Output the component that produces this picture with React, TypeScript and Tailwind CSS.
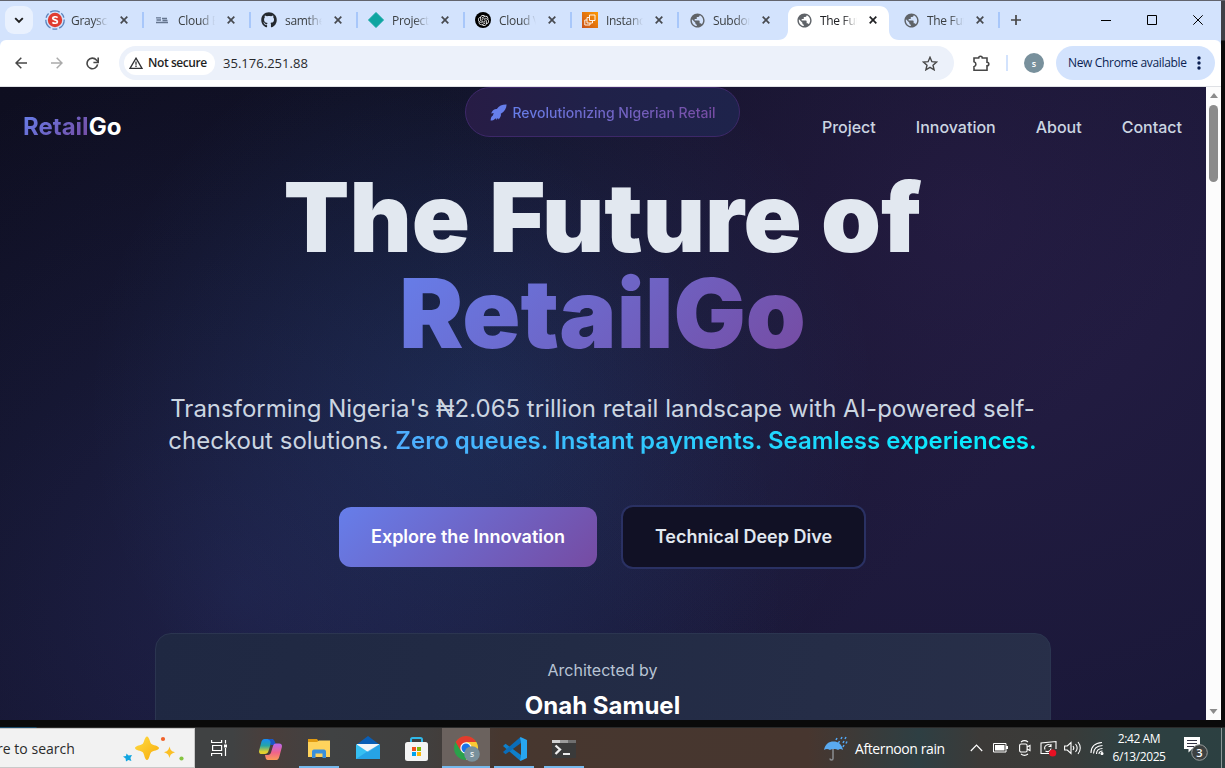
import React from "react";
import { FaGithub } from "react-icons/fa";
import { MdPublic } from "react-icons/md";
import { SiOpenai } from "react-icons/si";

const X = ({ dark = false }: { dark?: boolean }) => (
  <svg width="8" height="8" viewBox="0 0 8 8" className={dark ? "text-[#202124]" : "text-[#474a50]"}>
    <path d="M.7.7l6.6 6.6M7.3.7L.7 7.3" stroke="currentColor" strokeWidth="1.7" />
  </svg>
);

const Globe = () => <MdPublic size={17} color="#5f6368" />;

const tabs: { title: string; icon: React.ReactNode }[] = [
  {
    title: "Graysca",
    icon: (
      <svg width="20" height="20" viewBox="0 0 20 20">
        <circle cx="10" cy="10" r="9.2" fill="none" stroke="#5a83bd" strokeWidth="1.3" strokeDasharray="10 2 5 2" />
        <circle cx="10" cy="10" r="7.2" fill="#e03c31" />
        <path d="M12.6 7.6C11 6.3 7.7 6.5 7.7 8.3c0 2 4.7 1.2 4.7 3.4 0 1.9-3.400 2-5 .6" fill="none" stroke="#fff" strokeWidth="1.7" />
      </svg>
    ),
  },
  {
    title: "Cloud E",
    icon: (
      <svg width="12" height="7" viewBox="0 0 12 7">
        <path d="M0 .8h5M.5 3h4.500M6 1.500h5M6.500 3.500h5M0 5.500h12" stroke="#64758f" strokeWidth="1.300" />
      </svg>
    ),
  },
  { title: "samthe", icon: <FaGithub size={16} color="#24292f" /> },
  {
    title: "Project",
    icon: (
      <svg width="16" height="16" viewBox="0 0 16 16">
        <path d="M8 .5L15.500 8 8 15.500.5 8z" fill="#0ea5a0" stroke="#0ea5a0" strokeLinejoin="round" />
      </svg>
    ),
  },
  {
    title: "Cloud V",
    icon: (
      <span className="flex size-4 items-center justify-center rounded-full bg-black">
        <SiOpenai size={11} color="#fff" />
      </span>
    ),
  },
  {
    title: "Instanc",
    icon: (
      <svg width="16" height="16" viewBox="0 0 16 16">
        <defs>
          <linearGradient id="aws" x1="0" y1="1" x2="1" y2="0">
            <stop stopColor="#c8511b" />
            <stop offset="1" stopColor="#f90" />
          </linearGradient>
        </defs>
        <path d="M0 0h16v16H0z" fill="url(#aws)" />
        <path d="M7.500 3h5.500v5.500H7.500zM10.500 9v2H5V5.500h2M5 8H2.800v5H8v-2" fill="none" stroke="#fff" strokeWidth=".9" strokeLinejoin="round" />
      </svg>
    ),
  },
  { title: "Subdom", icon: <Globe /> },
  { title: "The Fut", icon: <Globe /> },
  { title: "The Fut", icon: <Globe /> },
];

function TabStrip() {
  return (
    <div className="flex h-[39px] shrink-0 bg-[#d3e3fd] pt-[5px]">
      <div className="ml-[5px] mr-[3px] flex h-7 w-7 items-center justify-center rounded-[9px] bg-[#e9f1fe]">
        <svg width="10" height="7" viewBox="0 0 10 7">
          <path d="M1.200 1.200L5 5l3.800-3.800" fill="none" stroke="#1f1f1f" strokeWidth="1.900" />
        </svg>
      </div>
      {tabs.map((t, i) => (
        <div key={i} className="relative flex h-[34px] w-[107px] shrink-0">
          {i === 7 && (
            <svg className="absolute -left-[7px] top-0" width="121" height="34" viewBox="0 0 121 34">
              <path d="M0 34c6 0 10-4 10-10V10C10 4 14 0 20 0h81c6 0 10 4 10 10v14c0 6 4 10 10 10z" fill="#fff" />
            </svg>
          )}
          <div className="relative flex h-7 w-full items-center">
            <span className="flex w-[38px] shrink-0 justify-center">{t.icon}</span>
            <span
              className={`-ml-[3px] mt-px block w-[37px] overflow-hidden whitespace-nowrap text-[12px] leading-4 tracking-[-0.3px] [mask-image:linear-gradient(to_right,#000_60%,transparent_100%)] ${i === 7 ? "text-[#202124]" : "text-[#3c4043]"}`}
            >
              {t.title}
            </span>
            <span className="ml-3 flex">
              <X dark={i === 7} />
            </span>
            {i !== 6 && i !== 7 && <span className="-mr-px ml-auto h-4 w-[2px] bg-[#a8c7fa]" />}
          </div>
        </div>
      ))}
      <div className="ml-[12px] flex h-7 items-center">
        <svg width="10" height="10" viewBox="0 0 10 10">
          <path d="M5 0v10M0 5h10" stroke="#474747" strokeWidth="1.700" />
        </svg>
      </div>
      <div className="ml-auto mr-[18px] flex h-7 items-center gap-[36px]">
        <svg width="10" height="10" viewBox="0 0 10 10">
          <path d="M0 5.500h10" stroke="#000" />
        </svg>
        <svg width="10" height="10" viewBox="0 0 10 10">
          <path d="M.5.5h9v9h-9z" fill="none" stroke="#000" />
        </svg>
        <svg width="10" height="10" viewBox="0 0 10 10">
          <path d="M.3.300l9.400 9.400M9.700.3L.3 9.700" stroke="#000" />
        </svg>
      </div>
    </div>
  );
}

function Toolbar() {
  return (
    <div className="flex h-[47px] shrink-0 items-center rounded-t-[6px] border-b border-[#dfe1e5] bg-white">
      <div className="flex w-[119px] shrink-0 items-center gap-[24px] pl-[15px]">
        <svg width="12" height="12" viewBox="0 0 12 12">
          <path d="M12 6H1.200M6.300.7L1 6l5.300 5.300" fill="none" stroke="#474747" strokeWidth="1.500" />
        </svg>
        <svg width="12" height="12" viewBox="0 0 12 12">
          <path d="M0 6h10.800M5.700.7L11 6l-5.300 5.300" fill="none" stroke="#ababab" strokeWidth="1.500" />
        </svg>
        <svg className="-ml-px" width="13" height="13" viewBox="0 0 13 13">
          <path d="M11.600 7.400A5.300 5.300 0 1 1 10.400 3L12 4.700" fill="none" stroke="#474747" strokeWidth="1.600" />
          <path d="M12.200.5v5H7.400" fill="none" stroke="#474747" strokeWidth="1.600" />
        </svg>
      </div>
      <div className="flex h-[34px] w-[835px] shrink-0 items-center rounded-full bg-[#ecf1fa] pl-[5px] pr-4">
        <div className="flex h-6 w-[91px] items-center rounded-full bg-white pl-[5px]">
          <svg width="14" height="12" viewBox="0 0 14 12">
            <path d="M7 1.200L13 11.300H1z" fill="none" stroke="#303134" strokeWidth="1.300" />
            <path d="M7 4.500v3.200M7 8.600v1.300" stroke="#303134" strokeWidth="1.300" />
          </svg>
          <span className="ml-[5px] whitespace-nowrap text-[12px] font-semibold tracking-[-0.42px] text-[#1f1f1f]">Not secure</span>
        </div>
        <span className="ml-2 mt-px text-[13px] tracking-[0.02px] text-[#28292c]">35.176.251.88</span>
        <svg className="ml-auto" width="16" height="15" viewBox="0 0 16 15">
          <path d="M8 1.300l1.900 4.400 4.700.4-3.600 3.100 1.100 4.600L8 11.400l-4.100 2.400L5 9.200 1.400 6.100l4.700-.4z" fill="none" stroke="#474747" strokeWidth="1.400" />
        </svg>
      </div>
      <svg className="ml-[19px]" width="17" height="17" viewBox="0 0 17 17">
        <path d="M1 3h4.700a1.800 1.800 0 0 1 3.600 0H14v4.200a1.800 1.800 0 0 1 0 3.600v4.500H1v-3.600a2.600 2.600 0 0 0 0-5z" fill="none" stroke="#474747" strokeWidth="1.600" />
      </svg>
      <span className="ml-4 h-4 w-[2px] bg-[#d3e3fd]" />
      <span className="ml-4 flex size-5 items-center justify-center rounded-full bg-[#78909c] text-[9px] font-semibold leading-none text-white">
        s
      </span>
      <div className="ml-3 flex h-[34px] w-[159px] items-center rounded-full bg-[#d3e3fd] pl-3 text-[12px] tracking-[-0.34px] text-[#0b1f52]">
        <span className="whitespace-nowrap">New Chrome available</span>
        <svg className="ml-[10px]" width="4" height="14" viewBox="0 0 4 14" fill="#0b1f52">
          <circle cx="2" cy="2" r="1.700" />
          <circle cx="2" cy="7" r="1.700" />
          <circle cx="2" cy="12" r="1.700" />
        </svg>
      </div>
    </div>
  );
}

function Page() {
  return (
    <div className="flex h-[633px] shrink-0">
      <main className="relative h-full w-[1206px] overflow-hidden font-['Inter',sans-serif] [background:radial-gradient(circle_at_20%_80%,rgba(90,110,234,0.15)_0%,transparent_50%),radial-gradient(circle_at_80%_20%,rgba(118,65,162,0.13)_0%,transparent_50%),radial-gradient(circle_at_40%_50%,rgba(60,160,254,0.13)_0%,transparent_50%),linear-gradient(135deg,#0e0e20_0%,#101024_20%,#15142e_50%,#1a1838_75%,#1a1839_100%)]">
        <div className="flex flex-col items-center pr-px">
          <div className="flex h-[50px] w-[275px] items-center justify-center gap-[5px] rounded-[25px] border border-[#3d2869] pl-px [background:linear-gradient(90deg,#271c45,#202149_45%,#1e234b)]">
            <svg width="17" height="17" viewBox="0 0 17 17">
              <path
                d="M16.600.4c-4-.2-7.600 1.200-9.800 4.600-2-.2-3.500.6-4.800 2.700l-.9 1.800 2.600-.5-.8 2.600C1.400 12.500.8 14 .6 16.400c2 0 3.200-.4 4.200-1.500l1.300-.6.2 1.700 1.600-2 .8 1.500 1.500-2.200c.8-1.200.9-2.300.6-3.500 3.800-2.200 5.700-5.500 5.800-9.400z"
                fill="#667eea"
              />
            </svg>
            <span className="mt-[2px] bg-linear-to-r from-[#667eea] to-[#764ba2] bg-clip-text text-[14px] font-medium leading-5 text-transparent">
              Revolutionizing Nigerian Retail
            </span>
          </div>
          <h1 className="mt-[32px] flex flex-col items-center text-[96px] font-black leading-[96px] text-[#e2e8f0]">
            <span>The Future of</span>
            <span className="bg-[linear-gradient(135deg,#667eea_0%,#764ba2_100%)] bg-clip-text text-transparent">RetailGo</span>
          </h1>
          <p className="mt-[32px] whitespace-nowrap text-center text-[24px] leading-8 text-[#cbd5e1]">
            Transforming Nigeria's ₦2.065 trillion retail landscape with AI-powered self-
            <br />
            checkout solutions.{" "}
            <span className="bg-[linear-gradient(90deg,#4facfe_0%,#00f2fe_100%)] bg-clip-text font-semibold text-transparent">
              Zero queues. Instant payments. Seamless experiences.
            </span>
          </p>
          <div className="mt-12 flex items-center gap-6">
            <button className="h-[60px] w-[258px] rounded-xl bg-[linear-gradient(135deg,#667eea_0%,#764ba2_100%)] pb-[2px] text-[18px] font-semibold text-white">
              Explore the Innovation
            </button>
            <button className="h-16 w-[245px] rounded-xl border-2 border-[#2a3163] bg-[#111125] pb-[2px] text-[18px] font-semibold text-[#e2e8f0]">
              Technical Deep Dive
            </button>
          </div>
          <div className="ml-px mt-16 flex h-[200px] w-[896px] flex-col items-center rounded-2xl border border-[#2b3550] bg-[linear-gradient(100deg,#1f2842,#222b45_45%,#282f49)] pr-px pt-6">
            <p className="text-[16px] leading-6 text-[#b8c4d4]">Architected by</p>
            <p className="mt-2 text-[24px] font-bold leading-8 text-white">Onah Samuel</p>
          </div>
        </div>
        <nav className="absolute left-0 top-0 flex h-20 w-full items-center justify-between px-6">
          <div className="-ml-px text-[24px] font-bold leading-8 text-white">
            <span className="bg-[linear-gradient(135deg,#667eea_0%,#764ba2_100%)] bg-clip-text text-transparent">Retail</span>Go
          </div>
          <div className="flex gap-10 text-[16px] font-medium text-[#cbd5e1]">
            <span>Project</span>
            <span>Innovation</span>
            <span>About</span>
            <span>Contact</span>
          </div>
        </nav>
      </main>
      <div className="flex w-[15px] flex-col items-center bg-[#fcfcfc] py-[6px]">
        <svg width="8" height="5" viewBox="0 0 8 5">
          <path d="M4 0l4 5H0z" fill="#8b8b8b" />
        </svg>
        <div className="mt-[7px] h-[77px] w-[9px] rounded-full bg-[#8b8b8b]" />
        <svg className="mt-auto" width="9" height="5" viewBox="0 0 8 5">
          <path d="M0 0h8L4 5z" fill="#8b8b8b" />
        </svg>
      </div>
    </div>
  );
}

const Bar = ({ children, w, active = false }: { children: React.ReactNode; w: string; active?: boolean }) => (
  <div className={`flex h-10 w-12 shrink-0 flex-col items-center ${active ? "bg-[#6b625e]" : ""}`}>
    <div className="flex h-[38px] items-center pt-1">{children}</div>
    <span className={`h-[2px] bg-[#76b9ed] ${w}`} />
  </div>
);

function Taskbar() {
  return (
    <div className="flex h-10 w-full shrink-0 items-center overflow-hidden bg-[linear-gradient(90deg,#404243_0%,#404243_19%,#4a3e3b_22%,#404243_27%,#404040_34%,#47372f_41%,#47362f_66%,#2e3f43_75%,#3c3a38_80%,#3a3b39_87%,#2e4041_92%,#2c4041_100%)] text-white">
      <div className="flex h-[40px] w-[195px] shrink-0 items-center self-start border border-l-0 border-[#c9c9c9] bg-[#f2f2f2] pt-px">
        <span className="-ml-[3px] whitespace-nowrap text-[14px] tracking-[0.03px] text-[#2b2b2b]">re to search</span>
        <svg className="ml-auto mr-[9px]" width="62" height="26" viewBox="0 0 62 26">
          <defs>
            <linearGradient id="star" x1="0" y1="0" x2="1" y2="1">
              <stop stopColor="#ffdc43" />
              <stop offset="1" stopColor="#f7ac0c" />
            </linearGradient>
          </defs>
          <path d="M24 .5c2.200 0 2.800 5.800 4.200 7.200S36 9.800 36 12s-6.400 2.800-7.800 4.200S26.200 24 24 24s-2.800-6.400-4.200-7.800S12 14.200 12 12s6.400-2.900 7.800-4.300S21.800.5 24 .5z" fill="url(#star)" />
          <path d="M46.500 10.500c1 3.800 1.800 4.500 5.500 5.800-3.700 1.300-4.500 2-5.500 5.700-1-3.700-1.800-4.400-5.500-5.700 3.700-1.300 4.500-2 5.500-5.800z" fill="#fbbf24" />
          <path d="M3.500 17.500l2 2 3.500-.5-1.600 3 1 3-3-1-2.400 1.500-.4-3L0 20.500l3-.5z" fill="#12a5e0" />
          <circle cx="40" cy="3" r="2.100" fill="#f0612a" />
          <circle cx="58.500" cy="22.500" r="2.100" fill="#85c440" />
        </svg>
      </div>
      <div className="flex w-[51px] shrink-0 justify-center pr-[3px]">
        <svg width="17" height="16" viewBox="0 0 17 16" fill="none" stroke="#fff" strokeWidth="1.200">
          <path d="M.6 0v2.500h10V0M1.600 5.500h9v5h-9zM.6 16v-2.500h10V16M14.500 0v3.500M14.500 8v8" />
          <path d="M13 4.500h3v3h-3z" fill="#fff" stroke="none" />
        </svg>
      </div>
      <Bar w="w-0">
        <svg width="23" height="21" viewBox="0 0 23 21">
          <defs>
            <linearGradient id="cpa" x1="0" y1="0" x2="0" y2="1">
              <stop stopColor="#168af5" />
              <stop offset=".45" stopColor="#26a5a5" />
              <stop offset=".85" stopColor="#e2d02f" />
            </linearGradient>
            <linearGradient id="cpb" x1="0" y1="0" x2="0" y2="1">
              <stop stopColor="#b868f0" />
              <stop offset=".55" stopColor="#f1648a" />
              <stop offset="1" stopColor="#fb9c58" />
            </linearGradient>
          </defs>
          <path d="M5.500 0H14l-2 4-2.500 8c-.7 2.300-2 3-3.500 3H3c-3 0-3.500-2-2.500-5l2-7.500C3.200 1.200 4 0 5.500 0z" fill="url(#cpa)" />
          <path d="M12.500 0c2 0 3 1 3.700 3.500L17 6h-5.500C12 2 11 1 8.500 0z" fill="#1b55c4" />
          <path d="M17.500 21H9c-2 0-2.500-2-3-5h3c1.500 0 2.600-1 3-2.500l2-6.500c.5-1.700 1.500-2.500 3-2.500h3c3 0 3.500 2 2.500 5l-2 7.500c-.7 2.500-1.500 4-3 4z" fill="url(#cpb)" />
        </svg>
      </Bar>
      <div className="w-[1px] shrink-0" />
      <Bar w="w-10">
        <svg className="-mt-px" width="22" height="19" viewBox="0 0 22 19">
          <path d="M0 0h9l1.500 2H22v5H0z" fill="#e09a11" />
          <path d="M0 3h9l2-1.500h11V18H0z" fill="#ffd35c" />
          <path d="M4 19v-6c0-1.500.7-2.500 2-2.500h10c1.300 0 2 1 2 2.500v6h-3.500v-4.500h-7V19z" fill="#3990db" />
        </svg>
      </Bar>
      <div className="w-[1px] shrink-0" />
      <Bar w="w-0">
        <svg className="-mt-[3px]" width="24" height="23" viewBox="0 0 24 23">
          <path d="M0 9L12 0l12 9v3H0z" fill="#0a5eb5" />
          <path d="M1 8h22v9H1z" fill="#f4f6f8" />
          <path d="M0 8L12 16 24 8V23H0z" fill="#36bff2" />
          <path d="M0 23l12-8 12-7V23z" fill="#1c91dd" opacity=".6" />
        </svg>
      </Bar>
      <Bar w="w-0">
        <svg className="-mt-px" width="23" height="24" viewBox="0 0 23 24">
          <path d="M6 6V2.500C6 1.500 6.500 1 7.500 1h8c1 0 1.500.5 1.500 1.500V6" fill="none" stroke="#30b8e8" strokeWidth="2" />
          <rect y="5" width="23" height="19" rx="2.500" fill="#f4f4f4" />
          <path d="M7 10h4v4H7z" fill="#f1511b" />
          <path d="M12 10h4v4h-4z" fill="#80bb0a" />
          <path d="M7 15h4v4H7z" fill="#00a3ee" />
          <path d="M12 15h4v4h-4z" fill="#fbb70b" />
        </svg>
      </Bar>
      <div className="w-[2px] shrink-0" />
      <Bar w="w-12" active>
        <svg className="ml-px" width="26" height="26" viewBox="0 0 26 26">
          <circle cx="12" cy="12" r="12" fill="#2aa14b" />
          <path d="M1.600 6A12 12 0 0 1 22.400 6H12L6.800 15z" fill="#e33b2e" />
          <path d="M22.400 6A12 12 0 0 1 12 24l5.200-9L12 6z" fill="#fcc934" />
          <circle cx="12" cy="12" r="5.700" fill="#fff" />
          <circle cx="12" cy="12" r="4.500" fill="#1a73e8" />
          <circle cx="18" cy="18" r="7.800" fill="#78909c" />
          <text x="18" y="21" textAnchor="middle" fontSize="8.500" fontWeight="600" fill="#e8eef1">s</text>
        </svg>
      </Bar>
      <Bar w="w-10">
        <svg className="-mt-px ml-px" width="24" height="24" viewBox="0 0 24 24">
          <path d="M17.500 24L0 9l2.500-2.300L18 18z" fill="#0f80ca" />
          <path d="M17.500 0L0 15l2.500 2.300L18 6z" fill="#0a6dba" />
          <path d="M17.500 0L24 3v18l-6.500 3-.5-1 1-4.500v-13L17 1z" fill="#27a6f0" />
        </svg>
      </Bar>
      <div className="w-[2px] shrink-0" />
      <Bar w="w-10">
        <svg width="24" height="18" viewBox="0 0 24 18">
          <path d="M0 0h24v18H0z" fill="#3a3a3a" />
          <path d="M0 0h8v3H0z" fill="#d0d0d0" />
          <path d="M8 0h8v3H8z" fill="#9b9b9b" />
          <path d="M16 0h8v3h-8z" fill="#6f6f6f" />
          <path d="M3.500 5.500L8 9.500l-4.500 4.500" fill="none" stroke="#eee" strokeWidth="2.300" />
          <path d="M11 14h7" stroke="#fff" strokeWidth="1.800" />
        </svg>
      </Bar>
      <div className="ml-auto flex shrink-0 items-center">
        <svg width="24" height="25" viewBox="0 0 24 25">
          <path d="M9 8v14.500c0 2-3 2-3 0" fill="none" stroke="#8a8d91" strokeWidth="1.500" />
          <path d="M0 14C1 8 5 5.500 9.500 5.500S18 8 19 14c-2-1.200-3.500-1.200-5 0-2-1.200-6-1.200-8 0-2-1.200-4-1.200-6 0z" fill="#5aaaf0" />
          <path d="M13 2l-1 2M18 1l-1 2M22 1l-1 2M15.500 5l-1 2M20 5l-1 2M23 5.500l-1 2M20 9l-1 2" stroke="#53a8f5" strokeWidth="1.500" />
        </svg>
        <span className="ml-[7px] w-[106px] whitespace-nowrap text-[14px] tracking-[-0.4px]">Afternoon rain</span>
        <svg className="ml-[9px]" width="13" height="8" viewBox="0 0 13 8">
          <path d="M.8 7l5.700-5.800L12.200 7" fill="none" stroke="#fff" strokeWidth="1.200" />
        </svg>
        <svg className="ml-[10px]" width="15" height="10" viewBox="0 0 15 10">
          <path d="M.5.5h12.500v8.500H.5z" fill="none" stroke="#fff" />
          <path d="M2 2h9.500v5.500H2zM13 3h2v3h-2z" fill="#fff" />
        </svg>
        <svg className="ml-[11px]" width="12" height="16" viewBox="0 0 12 16" fill="none" stroke="#fff" strokeWidth="1.100">
          <rect x=".6" y="4" width="7.500" height="8" rx="1.500" />
          <path d="M8 7l3-1.500v5L8 9M2 2c2-1.500 5-1.500 7 0M2 14c2 1.500 5 1.500 7 0" />
        </svg>
        <svg className="ml-[9px]" width="18" height="17" viewBox="0 0 18 17" fill="none" stroke="#fff" strokeWidth="1.100">
          <path d="M16 9V1.500L1 3v10.500h8M5 9.500A3.500 3.500 0 0 1 11 6V4M11 6.500H8.500M11 8.500A3.500 3.500 0 0 1 5.500 11" />
          <circle cx="12.700" cy="13" r="3.600" fill="#e81123" stroke="none" />
        </svg>
        <svg className="ml-[6px]" width="17" height="14" viewBox="0 0 17 14" fill="none" stroke="#fff" strokeWidth="1.100">
          <path d="M.6 5h2.700L7 1.500v11L3.300 9H.6zM9 5c1 1.200 1 2.800 0 4M11.500 3c2 2.400 2 5.600 0 8M14 1c3 3.500 3 8.500 0 12" />
        </svg>
        <svg className="ml-[9px]" width="14" height="14" viewBox="0 0 14 14" fill="none" stroke="#fff" strokeWidth="1.100">
          <path d="M1 12C1 6 5 2 12 1.500M3.500 12.500C3.500 8 7 5 12.500 4.500M6.500 13c0-3.500 2.500-5.500 6-5.500M9 13c0-2 1.500-3 3.500-3" />
          <circle cx="12" cy="12.500" r="1" fill="#fff" />
        </svg>
        <div className="-mt-px ml-[5px] flex w-[60px] flex-col items-center whitespace-nowrap text-[12px] leading-[18px] tracking-[-0.42px]">
          <span>2:42 AM</span>
          <span>6/13/2025</span>
        </div>
        <svg className="ml-[14px]" width="26" height="26" viewBox="0 0 26 26">
          <path d="M1 2h16v12H9l-3.500 3.500V14H1z" fill="#fff" />
          <path d="M4 5.500h10M4 8.500h10M4 11.500h7" stroke="#334" />
          <circle cx="16.500" cy="17.500" r="7.800" fill="#3d4141" stroke="#9a9d9d" />
          <text x="16.500" y="21.500" textAnchor="middle" fontSize="11" fontWeight="600" fill="#fff">3</text>
        </svg>
        <div className="ml-[12px] mr-[3px] h-10 w-px bg-[#8b9696]" />
      </div>
    </div>
  );
}

export default function App() {
  return (
    <div className="flex h-[768px] w-[1225px] flex-col overflow-hidden bg-[#0a0a0a] font-['Open_Sans','Noto_Sans',sans-serif]">
      <div className="h-px shrink-0 bg-[#62646d]" />
      <div className="flex shrink-0">
        <div className="w-[1221px] bg-[#d3e3fd]">
          <TabStrip />
          <Toolbar />
          <Page />
        </div>
        <div className="w-1 bg-[linear-gradient(to_bottom,#3f4147_0%,#3f4147_39px,#0a0a0a_40px)]" />
      </div>
      <div className="h-[7px] shrink-0 bg-[#0a0a0a]" />
      <div className="h-px shrink-0 bg-[linear-gradient(90deg,#1c4a68_0%,#1c4a68_36px,#2b2b2b_37px)]" />
      <Taskbar />
    </div>
  );
}
